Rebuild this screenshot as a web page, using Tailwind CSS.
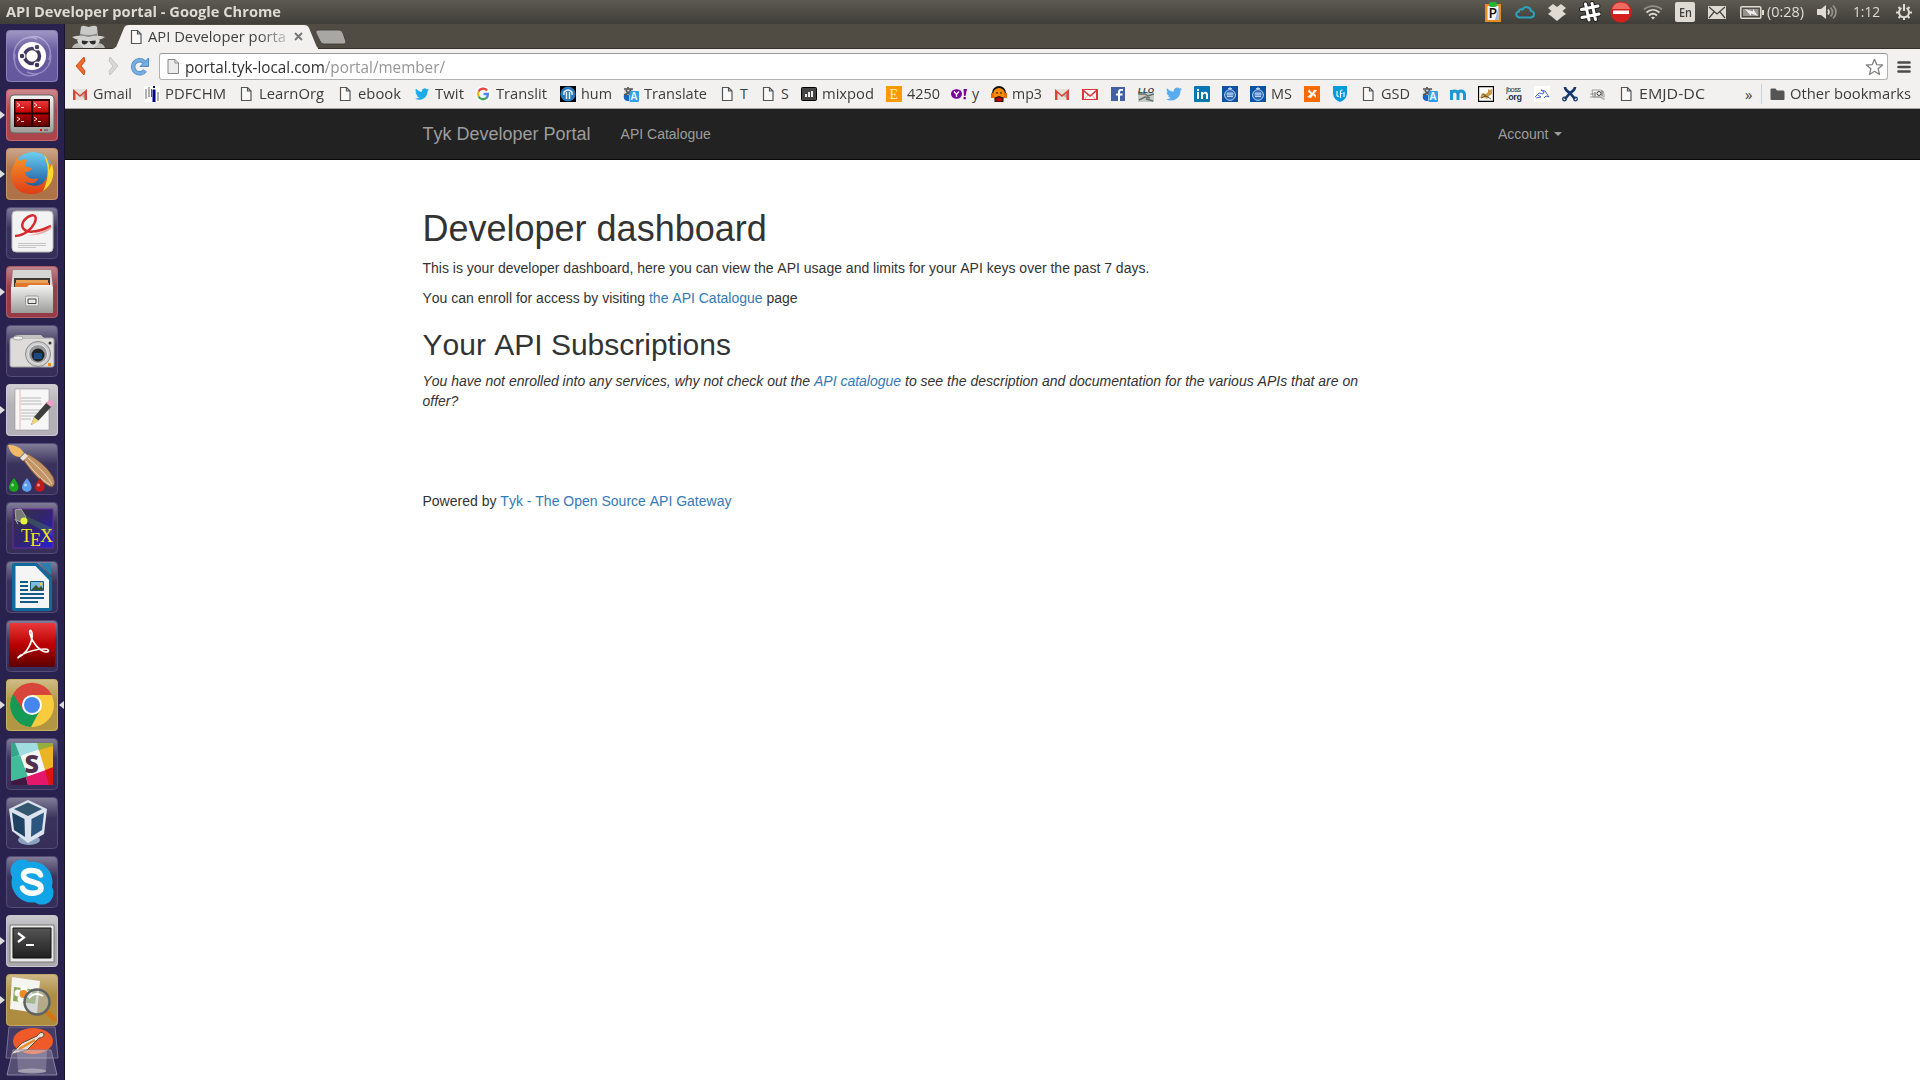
<!DOCTYPE html>
<html lang="en">
<head>
<meta charset="utf-8">
<title>API Developer portal</title>
<script src="https://cdn.jsdelivr.net/npm/@tailwindcss/browser@4"></script>
</head>
<body class="w-[1920px] h-[1080px] overflow-hidden bg-white flex flex-col font-['Open_Sans',sans-serif]">

<!-- shared gradients and symbols -->
<svg class="absolute w-0 h-0" aria-hidden="true">
  <defs>
    <linearGradient id="gloss" x1="0" y1="0" x2="0" y2="1"><stop offset="0" stop-color="#fff" stop-opacity=".42"/><stop offset=".4" stop-color="#fff" stop-opacity=".08"/><stop offset="1" stop-color="#fff" stop-opacity=".06"/></linearGradient>
    <linearGradient id="red" x1="0" y1="0" x2="0" y2="1"><stop offset="0" stop-color="#e8393b"/><stop offset=".5" stop-color="#b00"/><stop offset="1" stop-color="#5c0000"/></linearGradient>
    <linearGradient id="metal" x1="0" y1="0" x2="0" y2="1"><stop offset="0" stop-color="#f4f4f2"/><stop offset="1" stop-color="#9c9c99"/></linearGradient>
    <linearGradient id="orange" x1="0" y1="0" x2="0" y2="1"><stop offset="0" stop-color="#f79a2c"/><stop offset="1" stop-color="#dd3d16"/></linearGradient>
    <linearGradient id="globe" x1="0" y1="0" x2="0" y2="1"><stop offset="0" stop-color="#6cd0f4"/><stop offset="1" stop-color="#14488f"/></linearGradient>
    <linearGradient id="dark" x1="0" y1="0" x2="0" y2="1"><stop offset="0" stop-color="#555"/><stop offset="1" stop-color="#202020"/></linearGradient>
    <linearGradient id="tex" x1="0" y1="0" x2="1" y2="1"><stop offset="0" stop-color="#35363a"/><stop offset=".5" stop-color="#32246f"/><stop offset="1" stop-color="#2420d8"/></linearGradient>
    <symbol id="page" viewBox="0 0 16 16"><path d="M3.500 1.500h6l3.500 3.500v9.500h-9.500zM9.500 1.500v3.500h3.500" fill="#fff" fill-opacity=".6" stroke="#555" stroke-width="1.200"/></symbol>
    <symbol id="gmail" viewBox="0 0 16 16"><path d="M1 3h14v11H1z" fill="#e4e0da"/><path d="M8 9l7 5V4z" fill="#b9b5ae"/><path d="M1 14V3l7 6 7-6v11h-2.500V7L8 11 3.500 7v7z" fill="#d9453a"/></symbol>
    <symbol id="bird" viewBox="0 0 24 24"><path d="M24 4.600a10 10 0 0 1-2.800.8 5 5 0 0 0 2.100-2.700 10 10 0 0 1-3.100 1.200 4.900 4.900 0 0 0-8.400 4.500A14 14 0 0 1 1.700 3.200a4.900 4.900 0 0 0 1.500 6.500 5 5 0 0 1-2.200-.6 4.900 4.900 0 0 0 4 4.900 5 5 0 0 1-2.200.1 4.900 4.900 0 0 0 4.600 3.400A10 10 0 0 1 0 19.500 14 14 0 0 0 21.500 7.100 10 10 0 0 0 24 4.600z"/></symbol>
    <symbol id="trans" viewBox="0 0 16 16"><path d="M1 2h9v7H1z" fill="#ddd"/><path d="M1 3h9M5 1v2M8 3C7 7 4 8 1 9M3 4c1 3 3 4 6 5" fill="none" stroke="#555" stroke-width="1.700"/><path d="M1 9h5v6C2 15 0 13 1 9z" fill="#1667c4"/><rect x="6.500" y="5" width="9.500" height="11" rx="1" fill="#2f9fe8"/><text x="7.500" y="14" font-family="Open Sans" font-size="10" font-weight="700" fill="#e6f4ff">A</text></symbol>
    <symbol id="crest" viewBox="0 0 16 16"><path d="M0 0h16v16H0z" fill="#0c53a5"/><circle cx="8" cy="9" r="5.400" fill="#2c6cb8" stroke="#b8cfec"/><path d="M6 2.500h4M8 1v3M4.500 8h7M5 10.500h6M6 6v4M8 6v4M10 6v4" stroke="#c9dcf3" stroke-width=".9"/></symbol>
  </defs>
</svg>

<!-- desktop panel -->
<header class="h-6 shrink-0 flex items-center justify-between bg-linear-to-b from-[#5d5a51] to-[#3f3e39] text-[#dfdbd2] pl-[6px] pr-2">
  <span data-w="275" class="text-[14px] leading-6 font-bold whitespace-nowrap">API Developer portal - Google Chrome</span>
  <div class="flex items-center h-6 text-[14.500px]">
    <svg class="w-[18px] h-[22px] mr-[13px]" viewBox="0 0 18 22"><rect x="1" y="3" width="16" height="18" fill="#e8891c"/><rect x="3.500" y="5" width="11" height="14" fill="#f4f6fa"/><path d="M11 19h3.500V6z" fill="#9bb7e6"/><rect x="5" y="1" width="8" height="5" rx="2" fill="#25b535"/><text x="4.500" y="17" font-family="Open Sans" font-size="14" font-weight="600" fill="#111">P</text></svg>
    <svg class="w-5 h-[14px] mr-3" viewBox="0 0 20 14"><path d="M5 12.500h10.500a3.300 3.300 0 0 0 .5-6.600C15.500 2 9.500.5 7.500 4.500 5 3.700 3.800 5 4 6.500 0 7 .5 12.500 5 12.500z" fill="none" stroke="#2ba1bd" stroke-width="2"/></svg>
    <svg class="w-5 h-[18px] mr-3" viewBox="0 0 20 18" fill="#dfdbd2"><path d="M6 1l4 3 4-3 5 4-3.500 3L19 11l-3 2-6 5-6-5-3-2 3.500-3L1 5z"/></svg>
    <svg class="w-[22px] h-[22px] mr-[9px]" viewBox="0 0 22 22"><path d="M6.500 3l3.500 16M13 2.500L16.500 18.500M2.500 8.500L19 5M3 16.500l17-3.500" stroke="#222" stroke-width="5" stroke-linecap="round"/><path d="M6.500 3l3.500 16M13 2.500l3.500 16M2.500 8.500L19 5M3 16.500l17-3.500" stroke="#fff" stroke-width="3" stroke-linecap="round"/></svg>
    <svg class="w-[22px] h-[22px] mr-[11px]" viewBox="0 0 22 22"><circle cx="11" cy="11" r="10.500" fill="#d3201f"/><path d="M2 8a9.500 9.500 0 0 1 18 0z" fill="#ec6b62"/><path d="M3 9.500h16v3.500H3z" fill="#fff"/></svg>
    <svg class="w-5 h-4 mr-3" viewBox="0 0 20 16" fill="none" stroke="#dfdbd2" stroke-width="1.800"><path d="M1 5.500C6 1 14 1 19 5.500" opacity=".45"/><path d="M3.500 8.500c4-3.500 9-3.500 13 0M6 11.500c2.500-2.200 5.500-2.200 8 0"/><path d="M8 13.500c1-1 3-1 4 0l-2 2z" fill="#dfdbd2" stroke="none"/></svg>
    <span class="w-5 h-5 mr-[13px] pl-[3.500px] bg-[#dfdbd2] rounded-xs text-[#44423d] text-[12.500px] leading-[21px] font-semibold"><span data-w="13">En</span></span>
    <svg class="w-[18px] h-[13px] mr-[14px]" viewBox="0 0 18 13"><path d="M0 0h18v13H0z" fill="#dfdbd2"/><path d="M1 1l8 7 8-7M1 12l5-6M17 12l-5-6" fill="none" stroke="#44423d" stroke-width="1.200"/></svg>
    <svg class="w-6 h-[13px] mr-[3px]" viewBox="0 0 24 13"><rect x=".8" y=".8" width="20" height="11.400" rx="1" fill="none" stroke="#dfdbd2" stroke-width="1.500"/><path d="M3 3h15.500v7H3z" fill="#96938c"/><path d="M5 3l8 2.500V3l5 7-7-2.500V10z" fill="#eee"/><path d="M22 4h2v5h-2z" fill="#dfdbd2"/></svg>
    <span class="w-[37px] mr-[13px] leading-6"><span data-w="37">(0:28)</span></span>
    <svg class="w-5 h-4 mr-4" viewBox="0 0 20 16" fill="none" stroke="#dfdbd2" stroke-width="1.700"><path d="M0 5h4l5-4v14l-5-4H0z" fill="#dfdbd2" stroke="none"/><path d="M11 5.500q2 2.500 0 5"/><path d="M13.500 3.500q4 4.500 0 9M16 1.500q6 6.500 0 13" opacity=".5"/></svg>
    <span class="w-[27px] mr-4 leading-6"><span data-w="27">1:12</span></span>
    <svg class="w-4 h-4" viewBox="0 0 16 16" fill="none" stroke="#dfdbd2"><path d="M5.500 4a5 5 0 1 0 5 0" stroke-width="2"/><path d="M8 0v7M0 8.500h3M13 8.500h3M2.500 14l2-2M13.500 14l-2-2M8 13v3M2.500 3l2 2M13.500 3l-2 2" stroke-width="2.100"/></svg>
  </div>
</header>

<div class="flex flex-1 min-h-0">
  <!-- launcher -->
  <aside class="w-[65px] shrink-0 bg-[#29214e] border-r border-[#17122e] pt-[6px] pl-[6px] flex flex-col gap-[7px]">
    <svg class="w-[52px] h-[52px] shrink-0" viewBox="0 0 52 52"><rect width="52" height="52" rx="4" fill="#5b4d98"/><g fill="none" stroke="#a79dd0" stroke-width="1.500" opacity=".7"><path d="M8 30C6 14 18 4 31 9M20 8c16-6 28 8 23 22M44 20c4 18-10 28-23 22M32 44C16 50 6 38 9 24"/></g><circle cx="26" cy="26" r="14" fill="#fff"/><circle cx="26" cy="26" r="7.500" fill="none" stroke="#30264f" stroke-width="3.500"/><g fill="#30264f" stroke="#fff" stroke-width="1.200"><circle cx="16" cy="26" r="2.900"/><circle cx="31" cy="17" r="2.900"/><circle cx="31" cy="35" r="2.900"/></g><rect x=".5" y=".5" width="51" height="51" rx="4" fill="url(#gloss)" stroke="#8c82bb"/></svg>
    <svg class="w-[52px] h-[52px] shrink-0 overflow-visible" viewBox="0 0 52 52"><path d="M-6 22v8l5-4z" fill="#ddd"/><rect width="52" height="52" rx="4" fill="#a9383f"/><rect x=".5" y=".5" width="51" height="51" rx="4" fill="url(#gloss)" stroke="#c46a70"/><rect x="4" y="6" width="44" height="38" rx="4" fill="url(#metal)" stroke="#666"/><rect x="8" y="10" width="36" height="28" fill="#2a0000"/><g fill="url(#red)"><path d="M9.500 12h33v25h-33z"/></g><path d="M26 11v27M9 24.500h34" stroke="#2a0000" stroke-width="2"/><g fill="none" stroke="#fbdcdc"><path d="M11 14l3 2-3 2M15 18.500h3M28 14l3 2-3 2M32 18.500h3M11 28l3 2-3 2M15 32.500h3M28 28l3 2-3 2M32 32.500h3"/></g><path d="M34 40h2v2h-2z" fill="red"/><path d="M38 40h4v2h-4z" fill="#777"/></svg>
    <svg class="w-[52px] h-[52px] shrink-0 overflow-visible" viewBox="0 0 52 52"><path d="M-6 22v8l5-4z" fill="#ddd"/><rect width="52" height="52" rx="4" fill="#a9693c"/><rect x=".5" y=".5" width="51" height="51" rx="4" fill="url(#gloss)" stroke="#c8946c"/><circle cx="27" cy="24" r="20" fill="url(#globe)"/><path d="M38 6c3 5 5 8 4 13l3-4c6 15-2 30-18 31C15 47 5 40 5 27c0-5 2-9 4-12l1-5c2 1 3 2 4 3 3-2 5-2 7-1-1 3-2 4-1 7l6 1c-1 3-4 4-7 4 0 4 4 6 7 7 3 0 4-1 6 0-3 6-9 4-13 3 6 6 17 5 21-3 3-7 2-17-2-25z" fill="url(#orange)"/><path d="M38 6c3 5 6 10 5 16l3-6c4 12-1 22-9 27 4-8 6-18 4-27z" fill="#ffd52e"/></svg>
    <svg class="w-[52px] h-[52px] shrink-0" viewBox="0 0 52 52"><rect x=".5" y=".5" width="51" height="51" rx="4" fill="url(#gloss)" stroke="#544b76"/><rect x="6" y="4" width="41" height="41" rx="4" fill="#f3f3f3" stroke="#bbb"/><path d="M9 29C28 28 36 4 24 9 10 15 14 34 45 19" fill="none" stroke="#d52b2f" stroke-width="2.500"/><path d="M20 29c12-2 18-5 25-10v3c-6 4-12 6-25 7z" fill="#e88" opacity=".7"/><path d="M12 36.500h28M12 38.500h28M12 40.500h18" stroke="#b9b9b9" stroke-width=".8"/></svg>
    <svg class="w-[52px] h-[52px] shrink-0 overflow-visible" viewBox="0 0 52 52"><path d="M-6 22v8l5-4z" fill="#ddd"/><rect width="52" height="52" rx="4" fill="#8e2f3c"/><rect x=".5" y=".5" width="51" height="51" rx="4" fill="url(#gloss)" stroke="#b05c68"/><path d="M7 4h38l2 18H5z" fill="#d5d5d3"/><path d="M8 12h36v12H8z" fill="#3e3732"/><path d="M10 14h32v3H10z" fill="#e8a35a"/><path d="M9 17h34v5H9z" fill="#e2772e"/><path d="M5 21h16l2-2h22l2 2v26H5z" fill="url(#metal)"/><rect x="19.500" y="30" width="13" height="10" rx="1.500" fill="#e8e8e8" stroke="#999"/><path d="M22 33h8v4.500h-8z" fill="none" stroke="#444"/></svg>
    <svg class="w-[52px] h-[52px] shrink-0" viewBox="0 0 52 52"><rect x=".5" y=".5" width="51" height="51" rx="4" fill="url(#gloss)" stroke="#544b76"/><rect x="4" y="13" width="44" height="29" rx="2" fill="#dddcda" stroke="#a09f9c"/><path d="M8 13q0-3 5-3h22l3 3z" fill="#c4c4c2"/><ellipse cx="12" cy="13" rx="5" ry="2" fill="#eee" stroke="#888" stroke-width=".7"/><circle cx="32" cy="29" r="12.500" fill="#cfcfcf" stroke="#8a8a8a"/><circle cx="32" cy="29" r="9.500" fill="#98999b" stroke="#e8e8e8"/><circle cx="32" cy="30" r="6.500" fill="#222"/><path d="M28 28h8v6h-8z" fill="#1a4a86"/><path d="M42 38h3v3h-3z" fill="#f28c1c"/><circle cx="44" cy="18" r="1.500" fill="#333"/></svg>
    <svg class="w-[52px] h-[52px] shrink-0 overflow-visible" viewBox="0 0 52 52"><path d="M-6 22v8l5-4z" fill="#ddd"/><rect width="52" height="52" rx="4" fill="#aeabb2"/><rect x=".5" y=".5" width="51" height="51" rx="4" fill="url(#gloss)" stroke="#cbc9ce"/><path d="M9 5h34v41H9z" fill="#f7f7f7" stroke="#999" stroke-width=".6"/><path d="M14 5v41" stroke="#efb7b7"/><path d="M15 14h20M15 17h20M15 20h21M15 26h20M15 29h16M15 32h18M15 35h10" stroke="#b8b8b8"/><path d="M25 41l3-8 13-15 5 4-14 15z" fill="#3e3e3e"/><path d="M25 41l3-8 5 4z" fill="#ecd77e"/><path d="M40 19l3-3q4 0 5 4l-3 3z" fill="#ee9dc4"/></svg>
    <svg class="w-[52px] h-[52px] shrink-0" viewBox="0 0 52 52"><rect x=".5" y=".5" width="51" height="51" rx="4" fill="url(#gloss)" stroke="#544b76"/><path d="M18 14l4-3c8 5 18 11 25 23 2 5 2 8-1 10-8-2-18-12-28-26z" fill="#c19468" stroke="#80552f" stroke-width=".7"/><path d="M22 15c9 8 17 15 24 26M20 18c8 11 15 18 24 24" stroke="#efd8b6" fill="none"/><path d="M14 15l5-5 3 3-5 5z" fill="#e9e4da"/><path d="M2 2c6 0 12 1 16 8l-4 4C8 14 4 10 2 2z" fill="#f0b964"/><path d="M8 35q9 12 0 14-10-2 0-14z" fill="#19a41c"/><path d="M21 35q9 12 0 14-10-2 0-14z" fill="#5b9dee"/><path d="M34 35q9 12 0 14-10-2 0-14z" fill="#bf1b1b"/><g fill="#fff" opacity=".55"><circle cx="6.500" cy="42" r="1.500"/><circle cx="19.500" cy="42" r="1.500"/><circle cx="32.500" cy="42" r="1.500"/></g></svg>
    <svg class="w-[52px] h-[52px] shrink-0" viewBox="0 0 52 52"><rect x=".5" y=".5" width="51" height="51" rx="4" fill="url(#gloss)" stroke="#544b76"/><rect x="7" y="7" width="40" height="39" fill="url(#tex)" stroke="#6a2aa0"/><path d="M18 18l28 16V26L20 14z" fill="#4d9b56" opacity=".3"/><path d="M9 8l6-1 5 8-5 5-5-2zM9 17l3 5" fill="#777" stroke="#aaa"/><circle cx="18" cy="19" r="3.500" fill="#e7f23e"/><g font-family="Liberation Serif" font-size="18" fill="#f4e51c"><text x="15" y="40">T</text><text x="24" y="44">E</text><text x="34" y="40">X</text></g></svg>
    <svg class="w-[52px] h-[52px] shrink-0" viewBox="0 0 52 52"><rect x=".5" y=".5" width="51" height="51" rx="4" fill="url(#gloss)" stroke="#544b76"/><path d="M34 2h11v12z" fill="#2b7fae"/><path d="M8 2h23l15 15v31q0 2-2 2H8q-2 0-2-2V4q0-2 2-2z" fill="#126a9c"/><path d="M9.500 5h20L43 19v28H9.500z" fill="#f5f5f5"/><path d="M14 21h8M14 25h8M14 29h8M14 33h24M14 37h24M14 41h18" stroke="#125c86" stroke-width="2"/><path d="M24.500 20.500h13v9h-13z" fill="#7cb9df" stroke="#125c86"/><path d="M25 29l5-5 3 3 2-2 3 4z" fill="#35542f"/><circle cx="35" cy="23" r="1.500" fill="#f3c73f"/></svg>
    <svg class="w-[52px] h-[52px] shrink-0" viewBox="0 0 52 52"><rect x=".5" y=".5" width="51" height="51" rx="4" fill="url(#gloss)" stroke="#544b76"/><path d="M3 3h46v44H3z" fill="url(#red)"/><path d="M13 37c8-4 14-15 13-24-1-4-3-3-2 1 2 8 9 17 16 18 4 0 3-3-1-3-9 0-16 2-24 6-3 2-4 4-2 2z" fill="none" stroke="#fff" stroke-width="1.700"/></svg>
    <svg class="w-[52px] h-[52px] shrink-0 overflow-visible" viewBox="0 0 52 52"><path d="M-6 22v8l5-4zM58 22v8l-5-4z" fill="#ddd"/><rect width="52" height="52" rx="4" fill="#ad8f35"/><rect x=".5" y=".5" width="51" height="51" rx="4" fill="url(#gloss)" stroke="#c7af64"/><circle cx="26" cy="26" r="22" fill="#f9cb3e"/><path d="M26 26L7 15A22 22 0 0 0 25 48l9-17z" fill="#159a56"/><path d="M7 15a22 22 0 0 1 39 1H26L17 31z" fill="#d8453b"/><circle cx="26" cy="26" r="10" fill="#fff"/><circle cx="26" cy="26" r="8" fill="#4587ee"/></svg>
    <svg class="w-[52px] h-[52px] shrink-0" viewBox="0 0 52 52"><rect x=".5" y=".5" width="51" height="51" rx="4" fill="url(#gloss)" stroke="#544b76"/><path d="M5 5h42v42H5z" fill="#f5f5f5"/><path d="M5 5h6l3 12-9 3z" fill="#37a58b"/><path d="M9 5h22l3 6-20 7z" fill="#a0dce0"/><path d="M31 5h16v4l-14 4z" fill="#95ad3d"/><path d="M33 12l14-4v21l-8 3z" fill="#ebb424"/><path d="M5 20l9-3 8 22-17 4z" fill="#40bd98"/><path d="M20 39l20-7 4 15H22z" fill="#e5176a"/><path d="M39 32l8-3v18h-4z" fill="#dc1414"/><path d="M5 43l15-4 2 8H5z" fill="#411641"/><text x="18.500" y="35" font-family="Open Sans" font-size="25" font-weight="800" fill="#50304c">S</text></svg>
    <svg class="w-[52px] h-[52px] shrink-0" viewBox="0 0 52 52"><rect x=".5" y=".5" width="51" height="51" rx="4" fill="url(#gloss)" stroke="#544b76"/><ellipse cx="23" cy="43" rx="11" ry="5" fill="#8ba3bf"/><path d="M22 3l19 9-3 25-16 9L6 34 3 12z" fill="#dbe4ee"/><path d="M22 5.500l14 6.500-14 7-14-7z" fill="#34566f"/><path d="M6 15.500l12.500 6.500.5 18L8 33z" fill="#1f4263"/><path d="M38 15.500L25.500 22 25 40l11-7z" fill="#2c567f"/></svg>
    <svg class="w-[52px] h-[52px] shrink-0" viewBox="0 0 52 52"><rect x=".5" y=".5" width="51" height="51" rx="4" fill="url(#gloss)" stroke="#544b76"/><circle cx="26" cy="26" r="20.500" fill="#12a4e6"/><circle cx="16" cy="15" r="11.500" fill="#12a4e6"/><circle cx="36" cy="37" r="11.500" fill="#12a4e6"/><path d="M34.500 19c-2-6-17-6-17 0 0 9 17.500 5 17.500 13 0 7-16 7-18.500 0" fill="none" stroke="#fff" stroke-width="5.500" stroke-linecap="round"/></svg>
    <svg class="w-[52px] h-[52px] shrink-0 overflow-visible" viewBox="0 0 52 52"><path d="M-6 22v8l5-4z" fill="#ddd"/><rect width="52" height="52" rx="4" fill="#a5a3a9"/><rect x=".5" y=".5" width="51" height="51" rx="4" fill="url(#gloss)" stroke="#c8c6cc"/><path d="M4 10h44v37H4z" fill="#e9e9e7" stroke="#777"/><path d="M7 13h38v30H7z" fill="url(#dark)" stroke="#111"/><path d="M12 18l6 4.500-6 4.500M20 30h8" fill="none" stroke="#fff" stroke-width="2.200"/></svg>
    <svg class="w-[52px] h-[52px] shrink-0 overflow-visible" viewBox="0 0 52 52"><path d="M-6 22v8l5-4z" fill="#ddd"/><rect width="52" height="52" rx="4" fill="#a88433"/><rect x=".5" y=".5" width="51" height="51" rx="4" fill="url(#gloss)" stroke="#c3a565"/><path d="M6 3l28 4-3 32-27-4z" fill="#f4f4f0"/><path d="M8 13l23 3-2 14-22-3z" fill="#8aa954"/><g fill="#fff"><circle cx="18" cy="15" r="3.500"/><circle cx="12" cy="19" r="3.500"/><circle cx="23" cy="20" r="3.500"/><circle cx="15" cy="25" r="3.500"/></g><circle cx="17.500" cy="20" r="4" fill="#ee8b22"/><path d="M42 39l6 6" stroke="#d07818" stroke-width="5" stroke-linecap="round"/><circle cx="31" cy="28" r="12.500" fill="#b9c3c3" fill-opacity=".55" stroke="#5f6265" stroke-width="2.500"/><path d="M23 24q6-7 14-2" fill="none" stroke="#fff" stroke-width="2"/></svg>
    <svg class="w-[54px] h-[50px] -mt-[7px] -ml-px shrink-0" viewBox="0 0 54 50"><path d="M4 1h46l3 31H1z" fill="#756e91" fill-opacity=".35" stroke="#79728f"/><ellipse cx="28" cy="15" rx="20" ry="13" fill="#f05a28"/><path d="M5 29l12-12 15-7q4-6 7-2 0 4-5 4L22 24q-8 2-17 5z" fill="#e8ddd0" stroke="#5a4a40"/><path d="M14 23l16-9" stroke="#ee8a2a" stroke-width="2.500"/><path d="M8 24h38l6 25H2z" fill="#cac5d6" fill-opacity=".28" stroke="#8a839f"/><path d="M12 24h30l-1 22H13z" fill="#fff" fill-opacity=".2"/><ellipse cx="27" cy="45" rx="14" ry="2.500" fill="#b9b6c2" fill-opacity=".7"/></svg>
  </aside>

  <!-- browser window -->
  <main class="flex-1 min-w-0 flex flex-col">
    <div class="h-[25px] shrink-0 flex bg-[#504c44] border-b border-[#35322c]">
      <svg class="w-[33px] h-6 ml-[7px]" viewBox="0 0 33 24"><path d="M7.500 13L9 3q1-2 4-1l3.500 1L20 2q4-1 5 1l1 10z" fill="#c9c9c7"/><path d="M8 9.500q8 3 17 0V13H8z" fill="#8c8b87"/><path d="M0 13q8-2.500 16.500 0Q25 10.500 33 13q-5 4-16.500 4T0 13z" fill="#d0d0ce"/><path d="M5 16h23l-2 5-4 3H11l-4-3z" fill="#d6d6d4"/><path d="M10 16.500l6.500.7 7-.7q1 3.500-2 4-3 0-4-3h-1.500q-1 3-4 3-3-.5-2-4z" fill="#2d2c29"/><path d="M0 24q1-4 6-5l5 5zM33 24q-1-4-6-5l-5 5z" fill="#babab7"/></svg>
      <div class="relative w-[206px] h-[26px] ml-[7px] shrink-0">
        <svg class="absolute inset-0 w-[206px] h-[26px]" viewBox="0 0 206 26"><path d="M0 25q4-1 5-4l7-17q1-3 5-3h175q4 0 5 3l7 17q1 4 6 4v1H0z" fill="#f2f1f0"/></svg>
        <div class="relative flex items-center h-[25px] pl-[16px]">
          <svg class="w-4 h-4"><use href="#page"/></svg>
          <span class="ml-1 w-[140px] text-[14.500px] leading-[25px] whitespace-nowrap"><span data-w="138" class="bg-linear-to-r from-[#3c3c3c] from-80% to-[#3c3c3c]/25 bg-clip-text text-transparent">API Developer porta</span></span>
          <svg class="w-[9px] h-[9px] ml-[6px]" viewBox="0 0 9 9"><path d="M1 1l7 7M8 1L1 8" stroke="#777" stroke-width="1.900"/></svg>
        </div>
      </div>
      <svg class="w-[32px] h-4 mt-[5px] -ml-[3px]" viewBox="0 0 32 16"><path d="M3 1h21q3 0 4 3l3 9q0 2-2 2H9q-3 0-4-3L1 4q-1-3 2-3z" fill="#a9a7a3" stroke="#3c3933" stroke-width=".8"/></svg>
    </div>

    <div class="h-[31px] shrink-0 flex items-end bg-[#f2f1f0]">
      <svg class="w-[14px] h-[20px] ml-[9px] mb-[4px]" viewBox="0 0 14 20"><path d="M10 1L2 10l8 9 1-4-4-5 4-5z" fill="#ee6d2d" stroke="#cc4b1a"/></svg>
      <svg class="w-[14px] h-[20px] ml-[18px] mb-[4px]" viewBox="0 0 14 20"><path d="M4 1l8 9-8 9-1-4 4-5-4-5z" fill="#d9d8d6" stroke="#c6c5c3"/></svg>
      <svg class="w-[20px] h-[20px] ml-[10px] mb-[3px]" viewBox="0 0 20 20"><path d="M15 13.500A6.500 6.500 0 1 1 14 5" fill="none" stroke="#4f88c4" stroke-width="4.500"/><path d="M18.500 1v8.500H10z" fill="#78addf" stroke="#4f88c4"/><path d="M15 13.500A6.500 6.500 0 1 1 14 5" fill="none" stroke="#78addf" stroke-width="3"/></svg>
      <div class="ml-[9px] w-[1729px] h-[27px] bg-white border border-[#b3b1ae] border-t-[#999] rounded-[3px] flex items-center pl-[5px] pr-[3px]">
        <svg class="w-4 h-[17px]" viewBox="0 0 16 17"><path d="M3 1.500h7l3.500 3.500v10.500H3zM10 1.500V5h3.500" fill="#ececec" stroke="#888"/></svg>
        <span class="ml-[4px] text-[16px] leading-[24px] whitespace-nowrap text-[#303030]" data-w="260">portal.tyk-local.com<span class="text-[#969696]">/portal/member/</span></span>
        <svg class="w-[19px] h-[18px] ml-auto" viewBox="0 0 19 18"><path d="M9.500 1.300l2.200 5.300 5.900.4-4.500 3.700 1.400 5.800-5-3.200-5 3.200 1.400-5.800L1.400 7l5.900-.4z" fill="#fff" stroke="#818181" stroke-width="1.300" stroke-linejoin="round"/></svg>
      </div>
      <svg class="w-[14px] h-[14px] ml-[9px] mb-[6px]" viewBox="0 0 14 14"><path d="M1.500 2.500h11M1.500 7h11M1.500 11.500h11" stroke="#4b4b4b" stroke-width="2.600" stroke-linecap="round"/></svg>
    </div>

    <nav class="h-[29px] shrink-0 flex items-center bg-[#f2f1f0] border-b border-[#a4a3a2] pl-[7px] pr-2 text-[14.200px] leading-[26px] text-[#3c3c3c] whitespace-nowrap">
      <div class="flex items-center gap-[5px] w-[72px] shrink-0"><svg class="w-4 h-4"><use href="#gmail"/></svg><span data-w="39">Gmail</span></div>
      <div class="flex items-center gap-[5px] w-[94px] shrink-0"><svg class="w-4 h-4" viewBox="0 0 16 16"><path d="M0 0h16v16H0z" fill="#fff"/><path d="M2 3v10M5 1v10M14 6v9" stroke="#999" stroke-width="1.500"/><path d="M7 3h1v8H7z" fill="#555"/><path d="M9 0h2v2H9zM8.500 3.500h3V16h-3z" fill="#000087"/></svg><span data-w="61">PDFCHM</span></div>
      <div class="flex items-center gap-[5px] w-[99px] shrink-0"><svg class="w-4 h-4"><use href="#page"/></svg><span data-w="65">LearnOrg</span></div>
      <div class="flex items-center gap-[5px] w-[77px] shrink-0"><svg class="w-4 h-4"><use href="#page"/></svg><span data-w="43">ebook</span></div>
      <div class="flex items-center gap-[5px] w-[61px] shrink-0"><svg class="w-[14px] h-4 mx-px fill-[#1cabec]"><use href="#bird"/></svg><span data-w="29">Twit</span></div>
      <div class="flex items-center gap-[5px] w-[85px] shrink-0"><svg class="w-4 h-4" viewBox="0 0 16 16"><circle cx="8" cy="8" r="8" fill="#fff"/><g fill="none" stroke-width="2.300"><path d="M12 4.500A5 5 0 0 0 3.600 5.500" stroke="#e94235"/><path d="M3.600 5.500a5 5 0 0 0 0 5" stroke="#fabb05"/><path d="M3.600 10.500a5 5 0 0 0 8 1.300" stroke="#34a853"/><path d="M8.500 8h4.400q0 2.500-1.400 3.800" stroke="#4285f4"/></g></svg><span data-w="51">Translit</span></div>
      <div class="flex items-center gap-[5px] w-[63px] shrink-0"><svg class="w-4 h-4" viewBox="0 0 16 16"><path d="M0 0h16v16H0z" fill="#000"/><circle cx="8" cy="8" r="7.600" fill="#2a78b8"/><path d="M4 9V6q4-4 8 0v3M6.500 6v7M9.500 6v7" fill="none" stroke="#e9f3fb" stroke-width="1.400"/></svg><span data-w="31">hum</span></div>
      <div class="flex items-center gap-[5px] w-[96px] shrink-0"><svg class="w-4 h-4"><use href="#trans"/></svg><span data-w="63">Translate</span></div>
      <div class="flex items-center gap-[5px] w-[41px] shrink-0"><svg class="w-4 h-4"><use href="#page"/></svg><span>T</span></div>
      <div class="flex items-center gap-[5px] w-[41px] shrink-0"><svg class="w-4 h-4"><use href="#page"/></svg><span>S</span></div>
      <div class="flex items-center gap-[5px] w-[85px] shrink-0"><svg class="w-4 h-4" viewBox="0 0 16 16"><rect x=".5" y="1.500" width="15" height="13" rx="1" fill="#444" stroke="#000"/><path d="M5 11V8M8 11V6M11 11V5" stroke="#fff" stroke-width="1.800"/></svg><span data-w="52">mixpod</span></div>
      <div class="flex items-center gap-[5px] w-[65px] shrink-0"><svg class="w-4 h-4" viewBox="0 0 16 16"><path d="M0 0h16v16H0z" fill="#f90"/><text x="3.500" y="13" font-family="Liberation Serif" font-size="14" fill="#fff0cc">E</text></svg><span data-w="33">4250</span></div>
      <div class="flex items-center gap-[5px] w-[40px] shrink-0"><svg class="w-4 h-4" viewBox="0 0 16 16"><ellipse cx="5.500" cy="8" rx="5.500" ry="4.800" fill="#7b0099"/><path d="M3 5.500l2.500 3 2.500-3M5.500 8v3" fill="none" stroke="#fff" stroke-width="1.400"/><path d="M12.500 3H16l-1.500 7h-1.500zM12.500 11h2.300v2.200h-2.300z" fill="#7b0099"/></svg><span>y</span></div>
      <div class="flex items-center gap-[5px] w-[63px] shrink-0"><svg class="w-4 h-4" viewBox="0 0 16 16"><circle cx="8" cy="7" r="7" fill="#111"/><circle cx="8" cy="8" r="6" fill="#ff8b00"/><path d="M0 7h3v5H0zM13 7h3v5h-3z" fill="#e86a00"/><path d="M5 7h2M9 7h2M4 12q4-3 8 0v4H4z" stroke="#111" fill="#a00"/></svg><span data-w="30">mp3</span></div>
      <div class="flex gap-3 w-[196px] shrink-0">
        <svg class="w-4 h-4 shrink-0"><use href="#gmail"/></svg>
        <svg class="w-4 h-4 shrink-0" viewBox="0 0 16 16"><path d="M0 3h16v11H0z" fill="#dd3437"/><path d="M2 4h12L8 9zM2 6v7h12V6l-6 5z" fill="#fff"/><path d="M3 13l3-4M13 13l-3-4" stroke="#e99"/></svg>
        <svg class="w-4 h-4 shrink-0" viewBox="0 0 16 16"><path d="M1 1h14v14H1z" fill="#4360a5"/><path d="M10 15V9.500h2.500V7.500H10V6q0-1.200 1.500-1.200H13V3h-2.300Q8 3 8 5.700v1.800H6v2h2V15z" fill="#fff"/></svg>
        <svg class="w-4 h-4 shrink-0" viewBox="0 0 16 16"><path d="M0 6h16v10H0z" fill="#c5cbc6"/><path d="M0 8h7l3 2 6-2M1 14l6-3 5 1M8 13l7 2" stroke="#68706b" stroke-width="1.500" fill="none"/><text x="0" y="6.500" font-family="Liberation Sans" font-size="8" font-weight="700" font-style="italic" fill="#253c50" textLength="16">LLO</text></svg>
        <svg class="w-4 h-4 shrink-0 fill-[#55acee]"><use href="#bird"/></svg>
        <svg class="w-4 h-4 shrink-0" viewBox="0 0 16 16"><rect width="16" height="16" rx="1" fill="#0077b5"/><path d="M3 6h2v7H3zM3 3h2v2H3zM7 6h2v1q1-1.300 2.500-1.200Q14 6 14 9v4h-2V9q0-1.500-1.300-1.500T9 9.200V13H7z" fill="#fff"/></svg>
        <svg class="w-4 h-4 shrink-0"><use href="#crest"/></svg>
      </div>
      <div class="flex items-center gap-[5px] w-[54px] shrink-0"><svg class="w-4 h-4"><use href="#crest"/></svg><span data-w="21">MS</span></div>
      <div class="flex gap-3 w-[56px] shrink-0">
        <svg class="w-4 h-4 shrink-0" viewBox="0 0 16 16"><path d="M0 0h16v16H0z" fill="#ff6a00"/><path d="M8 7L5 3l-1 3 3 2-4 3 4 1 2-3 3 3V9l-2-1 3-4h-3z" fill="#fff"/></svg>
        <svg class="w-4 h-4 shrink-0" viewBox="0 0 16 16"><path d="M1 0h14v8q-1 6-7 8-6-2-7-8z" fill="#069bdd"/><path d="M5 5v4q0 2 2 1M8.500 12V6q0-2 2-2M8 7.500h2.500M12 6v5" fill="none" stroke="#e8f7ff" stroke-width="1.200"/></svg>
      </div>
      <div class="flex items-center gap-[5px] w-[62px] shrink-0"><svg class="w-4 h-4"><use href="#page"/></svg><span data-w="29">GSD</span></div>
      <div class="flex gap-3 w-[196px] shrink-0">
        <svg class="w-4 h-4 shrink-0"><use href="#trans"/></svg>
        <svg class="w-4 h-4 shrink-0" viewBox="0 0 16 16"><path d="M1.500 14V4M1.500 8q0-3 3-3T8 8v6M8 8q0-3 3-3t3.500 3v6" fill="none" stroke="#1c98d6" stroke-width="3"/></svg>
        <svg class="w-4 h-4 shrink-0" viewBox="0 0 16 16"><path d="M.5.5h15v15H.5z" fill="#fff" stroke="#000" stroke-width="1.300"/><path d="M2 12l2-5 4 1 2-2V3l2 1 2-1v5l-3 2-2 3-3-2z" fill="#c79b48"/><path d="M3 12l5-2 5 3M5 8l3 2" stroke="#6d5222" fill="none"/></svg>
        <svg class="w-4 h-4 shrink-0" viewBox="0 0 16 16" font-family="Liberation Sans" fill="#24324a"><text x="0" y="6" font-size="7.500" textLength="15">jboss</text><text x="0" y="13.500" font-size="9" font-weight="700" textLength="16">.org</text></svg>
        <svg class="w-4 h-4 shrink-0" viewBox="0 0 16 16"><path d="M0 0h16v16H0z" fill="#fff"/><path d="M1 11l4-4 4 1 1-2-3-2 4 1 2 3 2 3-3-1-2 2M4 9l3 2-5 1" fill="none" stroke="#4969d4"/></svg>
        <svg class="w-4 h-4 shrink-0" viewBox="0 0 16 16" fill="none" stroke="#14386d"><path d="M3 1q0 3 5 6 5-3 5-6M8 7L3 13M8 7l5 6" stroke-width="2.700"/><circle cx="2.500" cy="13" r="1.800" stroke-width="1.300"/><circle cx="13.500" cy="13" r="1.800" stroke-width="1.300"/></svg>
        <svg class="w-4 h-4 shrink-0" viewBox="0 0 16 16" fill="none" stroke="#888"><path d="M2 4h8q4 0 4 4v3H3zM0 11h10l3 2h2M0 8h4" stroke-width=".8"/><circle cx="9" cy="7.500" r="2" stroke="#444"/><path d="M5 6v4M12 5v5" stroke="#555"/></svg>
      </div>
      <div class="flex items-center gap-[5px] w-[126px] shrink-0"><svg class="w-4 h-4"><use href="#page"/></svg><span data-w="66">EMJD-DC</span></div>
      <span class="w-[17px] text-[15px] leading-5 pl-px">»</span>
      <span class="w-px h-5 bg-[#c5d3e0]"></span>
      <svg class="w-[15px] h-[14px] ml-2" viewBox="0 0 15 14"><path d="M.5 2.500q0-1 1-1h4l1.500 2h6q1.500 0 1.500 1.500v7q0 1-1 1H1.500q-1 0-1-1z" fill="#555"/></svg>
      <span class="ml-[5px]" data-w="121">Other bookmarks</span>
    </nav>

    <!-- page -->
    <div class="font-['Liberation_Sans',sans-serif] [font-kerning:none] text-[14px] leading-5 text-[#333] flex-1 bg-white">
      <div class="h-[51px] bg-[#222] border-b border-[#080808]">
        <div class="w-[1140px] h-[50px] ml-[357.500px] flex items-center text-[#9d9d9d]">
          <span class="text-[18px] mr-[30px]">Tyk Developer Portal</span>
          <span>API Catalogue</span>
          <span class="ml-auto mr-px flex items-center">Account<i class="ml-[5px] border-x-4 border-t-4 border-x-transparent border-t-[#9d9d9d] inline-block"></i></span>
        </div>
      </div>
      <div class="w-[945px] ml-[357.500px] pt-[49px]">
        <h1 class="text-[36px] leading-[39.600px] mb-[9px]">Developer dashboard</h1>
        <p class="mb-[10px]">This is your developer dashboard, here you can view the API usage and limits for your API keys over the past 7 days.</p>
        <p>You can enroll for access by visiting <a class="text-[#337ab7]">the API Catalogue</a> page</p>
        <h2 class="text-[30px] leading-[33px] mt-5 mb-[10px]">Your API Subscriptions</h2>
        <p class="italic">You have not enrolled into any services, why not check out the <a class="text-[#337ab7]">API catalogue</a> to see the description and documentation for the various APIs that are on offer?</p>
        <p class="mt-[80px]">Powered by <a class="text-[#337ab7]">Tyk - The Open Source API Gateway</a></p>
      </div>
    </div>
  </main>
</div>
<script>
// Condense each interface label to its allotted width.
document.querySelectorAll('[data-w]').forEach(el => {
  el.style.display = 'inline-block';
  el.style.whiteSpace = 'nowrap';
  const natural = el.getBoundingClientRect().width;
  el.style.transformOrigin = '0 50%';
  el.style.transform = 'scaleX(' + el.dataset.w / natural + ')';
  el.style.marginRight = (el.dataset.w - natural) + 'px';
});
</script>
</body>
</html>
